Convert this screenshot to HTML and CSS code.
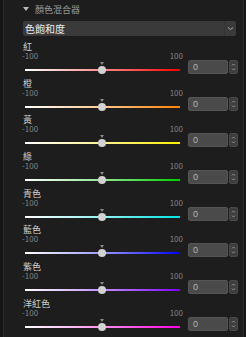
FILE: index.html
```html
<!DOCTYPE html>
<html lang="zh-Hant">
<head>
    <meta charset="UTF-8">
    <title>顏色混合器</title>
    <link rel="stylesheet" href="styles.css">
</head>
<body>
    <div class="panel">
        <div class="header">
            <span class="arrow"></span>
            <span class="title">顏色混合器</span>
        </div>
        <div class="select">
            <span>色飽和度</span>
            <span class="chev">
                <svg width="7" height="5" viewBox="0 0 7 5"><path d="M1 1.5 L3.5 3.5 L6 1.5" fill="none" stroke="#aaa" stroke-width="1"/></svg>
            </span>
        </div>

        <div class="list">
            <div class="mix red">
                <div class="label">紅</div>
                <div class="range"><span>-100</span><span>100</span></div>
                <div class="ctrl">
                    <div class="slider"><div class="track"></div><div class="tick"></div><div class="thumb"></div></div>
                    <div class="num">0</div>
                    <div class="spin"><svg width="5" height="10" viewBox="0 0 5 10"><path d="M1 3.5 L2.5 2 L4 3.5 M1 6.5 L2.5 8 L4 6.5" fill="none" stroke="#aaa" stroke-width="0.8"/></svg></div>
                </div>
            </div>
            <div class="mix orange">
                <div class="label">橙</div>
                <div class="range"><span>-100</span><span>100</span></div>
                <div class="ctrl">
                    <div class="slider"><div class="track"></div><div class="tick"></div><div class="thumb"></div></div>
                    <div class="num">0</div>
                    <div class="spin"><svg width="5" height="10" viewBox="0 0 5 10"><path d="M1 3.5 L2.5 2 L4 3.5 M1 6.5 L2.5 8 L4 6.5" fill="none" stroke="#aaa" stroke-width="0.8"/></svg></div>
                </div>
            </div>
            <div class="mix yellow">
                <div class="label">黃</div>
                <div class="range"><span>-100</span><span>100</span></div>
                <div class="ctrl">
                    <div class="slider"><div class="track"></div><div class="tick"></div><div class="thumb"></div></div>
                    <div class="num">0</div>
                    <div class="spin"><svg width="5" height="10" viewBox="0 0 5 10"><path d="M1 3.5 L2.5 2 L4 3.5 M1 6.5 L2.5 8 L4 6.5" fill="none" stroke="#aaa" stroke-width="0.8"/></svg></div>
                </div>
            </div>
            <div class="mix green">
                <div class="label">綠</div>
                <div class="range"><span>-100</span><span>100</span></div>
                <div class="ctrl">
                    <div class="slider"><div class="track"></div><div class="tick"></div><div class="thumb"></div></div>
                    <div class="num">0</div>
                    <div class="spin"><svg width="5" height="10" viewBox="0 0 5 10"><path d="M1 3.5 L2.5 2 L4 3.5 M1 6.5 L2.5 8 L4 6.5" fill="none" stroke="#aaa" stroke-width="0.8"/></svg></div>
                </div>
            </div>
            <div class="mix cyan">
                <div class="label">青色</div>
                <div class="range"><span>-100</span><span>100</span></div>
                <div class="ctrl">
                    <div class="slider"><div class="track"></div><div class="tick"></div><div class="thumb"></div></div>
                    <div class="num">0</div>
                    <div class="spin"><svg width="5" height="10" viewBox="0 0 5 10"><path d="M1 3.5 L2.5 2 L4 3.5 M1 6.5 L2.5 8 L4 6.5" fill="none" stroke="#aaa" stroke-width="0.8"/></svg></div>
                </div>
            </div>
            <div class="mix blue">
                <div class="label">藍色</div>
                <div class="range"><span>-100</span><span>100</span></div>
                <div class="ctrl">
                    <div class="slider"><div class="track"></div><div class="tick"></div><div class="thumb"></div></div>
                    <div class="num">0</div>
                    <div class="spin"><svg width="5" height="10" viewBox="0 0 5 10"><path d="M1 3.5 L2.5 2 L4 3.5 M1 6.5 L2.5 8 L4 6.5" fill="none" stroke="#aaa" stroke-width="0.8"/></svg></div>
                </div>
            </div>
            <div class="mix purple">
                <div class="label">紫色</div>
                <div class="range"><span>-100</span><span>100</span></div>
                <div class="ctrl">
                    <div class="slider"><div class="track"></div><div class="tick"></div><div class="thumb"></div></div>
                    <div class="num">0</div>
                    <div class="spin"><svg width="5" height="10" viewBox="0 0 5 10"><path d="M1 3.5 L2.5 2 L4 3.5 M1 6.5 L2.5 8 L4 6.5" fill="none" stroke="#aaa" stroke-width="0.8"/></svg></div>
                </div>
            </div>
            <div class="mix magenta">
                <div class="label">洋紅色</div>
                <div class="range"><span>-100</span><span>100</span></div>
                <div class="ctrl">
                    <div class="slider"><div class="track"></div><div class="tick"></div><div class="thumb"></div></div>
                    <div class="num">0</div>
                    <div class="spin"><svg width="5" height="10" viewBox="0 0 5 10"><path d="M1 3.5 L2.5 2 L4 3.5 M1 6.5 L2.5 8 L4 6.5" fill="none" stroke="#aaa" stroke-width="0.8"/></svg></div>
                </div>
            </div>
        </div>
    </div>
</body>
</html>
```

FILE: styles.css
```css
* {
    margin: 0;
    padding: 0;
    box-sizing: border-box;
}

body {
    background: #151515;
    font-family: 'Noto Sans CJK TC', 'Noto Sans', sans-serif;
    width: 246px;
    height: 337px;
    overflow: hidden;
}

.panel {
    margin-left: 3px;
    width: 241px;
    height: 337px;
    background: #1d1d1d;
    border-left: 1px solid #2a2a2a;
    border-right: 1px solid #2e2e2e;
    padding-left: 18px;
}

.header {
    display: flex;
    align-items: center;
    height: 17px;
    padding-top: 1px;
    padding-left: 1px;
}

.arrow {
    width: 0;
    height: 0;
    border-left: 3px solid transparent;
    border-right: 3px solid transparent;
    border-top: 4px solid #bbb;
    margin-right: 6px;
}

.title {
    font-size: 9px;
    color: #9a9a9a;
}

.select {
    margin-top: 4px;
    margin-left: 1px;
    width: 213px;
    height: 15px;
    background: #3a3a3a;
    border-radius: 2px;
    display: flex;
    align-items: center;
    justify-content: space-between;
    padding-left: 2px;
    font-size: 10px;
    color: #eee;
}

.chev {
    display: flex;
    align-items: center;
    justify-content: center;
    width: 12px;
    height: 15px;
    border-left: 1px solid #333;
}

.list {
    margin-top: 5px;
}

.mix {
    margin-bottom: 3.7px;
}

.label {
    height: 11px;
    line-height: 11px;
    font-size: 9px;
    color: #cfcfcf;
    padding-left: 1px;
}

.range {
    width: 161px;
    height: 8px;
    line-height: 8px;
    display: flex;
    justify-content: space-between;
    font-size: 8px;
    color: #858585;
}

.ctrl {
    display: flex;
    height: 14px;
}

.slider {
    position: relative;
    width: 161px;
    height: 14px;
}

.track {
    position: absolute;
    left: 3px;
    right: 3px;
    top: 9px;
    height: 2px;
}

.thumb {
    position: absolute;
    left: 76px;
    top: 6px;
    width: 8px;
    height: 8px;
    border-radius: 50%;
    background: #d2d2d2;
}

.tick {
    position: absolute;
    left: 78px;
    top: 2px;
    width: 0;
    height: 0;
    border-left: 2px solid transparent;
    border-right: 2px solid transparent;
    border-top: 3px solid #8a8a8a;
}

.num {
    margin-left: 5px;
    width: 40px;
    height: 14px;
    background: #4a4a4a;
    border: 1px solid #555;
    border-radius: 2px;
    font-family: 'Liberation Sans', sans-serif;
    font-size: 9px;
    line-height: 12px;
    color: #b5b5b5;
    padding-left: 4px;
}

.spin {
    margin-left: 1px;
    width: 9px;
    height: 14px;
    background: #3e3e3e;
    border: 1px solid #4a4a4a;
    border-radius: 2px;
    display: flex;
    align-items: center;
    justify-content: center;
}

.red .track { background: linear-gradient(to right, #fff, #ff8a8a 50%, #ff0000); }
.orange .track { background: linear-gradient(to right, #fff, #ffc890 50%, #ff8000); }
.yellow .track { background: linear-gradient(to right, #fff, #fff390 50%, #ffee00); }
.green .track { background: linear-gradient(to right, #fff, #8fe88f 50%, #00d000); }
.cyan .track { background: linear-gradient(to right, #fff, #90f2f2 50%, #00e6e6); }
.blue .track { background: linear-gradient(to right, #fff, #9a9aff 50%, #0000ff); }
.purple .track { background: linear-gradient(to right, #fff, #c090ff 50%, #8000ff); }
.magenta .track { background: linear-gradient(to right, #fff, #ff90f0 50%, #ff00e0); }
```
